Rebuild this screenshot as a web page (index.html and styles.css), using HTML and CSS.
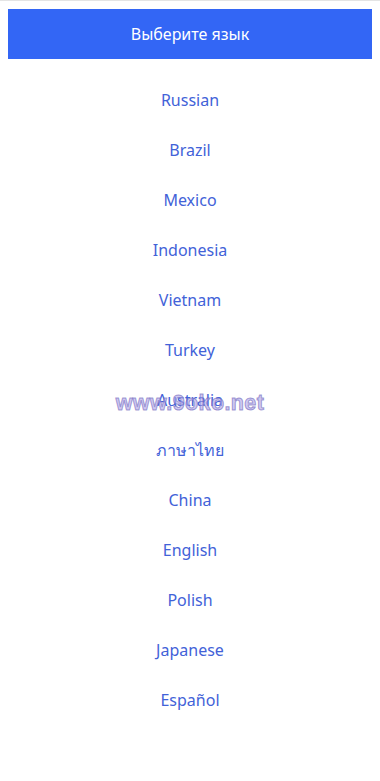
FILE: index.html
```html
<!DOCTYPE html>
<html lang="ru">
<head>
<meta charset="utf-8">
<title>Выберите язык</title>
<link rel="stylesheet" href="styles.css">
</head>
<body>
<header class="bar">Выберите язык</header>
<ul class="langs">
  <li>Russian</li>
  <li>Brazil</li>
  <li>Mexico</li>
  <li>Indonesia</li>
  <li>Vietnam</li>
  <li>Turkey</li>
  <li>Australia</li>
  <li>ภาษาไทย</li>
  <li>China</li>
  <li>English</li>
  <li>Polish</li>
  <li>Japanese</li>
  <li>Español</li>
</ul>
<div class="watermark">www.9oko.net</div>
</body>
</html>
```
FILE: styles.css
```css
html {
  border-top: 1px solid #e4e4e4;
  background: #fff;
}
body {
  margin: 8px;
  font-family: "Noto Sans", "Open Sans", sans-serif;
  position: relative;
}
.bar {
  height: 50px;
  background: #3366f5;
  color: #fff;
  font-size: 16px;
  display: flex;
  align-items: center;
  justify-content: center;
}
.langs {
  list-style: none;
  margin: 0;
  padding: 16px 0 0;
}
.langs li {
  height: 50px;
  line-height: 50px;
  text-align: center;
  font-size: 16px;
  color: #4262d8;
}
.watermark {
  position: absolute;
  top: 382px;
  left: 0;
  right: 0;
  text-align: center;
  font-family: "Liberation Sans", Arial, sans-serif;
  font-weight: bold;
  font-size: 21.5px;
  letter-spacing: 0.4px;
  color: rgba(175, 165, 232, 0.6);
  -webkit-text-stroke: 1px rgba(115, 105, 190, 0.65);
  pointer-events: none;
}
```
